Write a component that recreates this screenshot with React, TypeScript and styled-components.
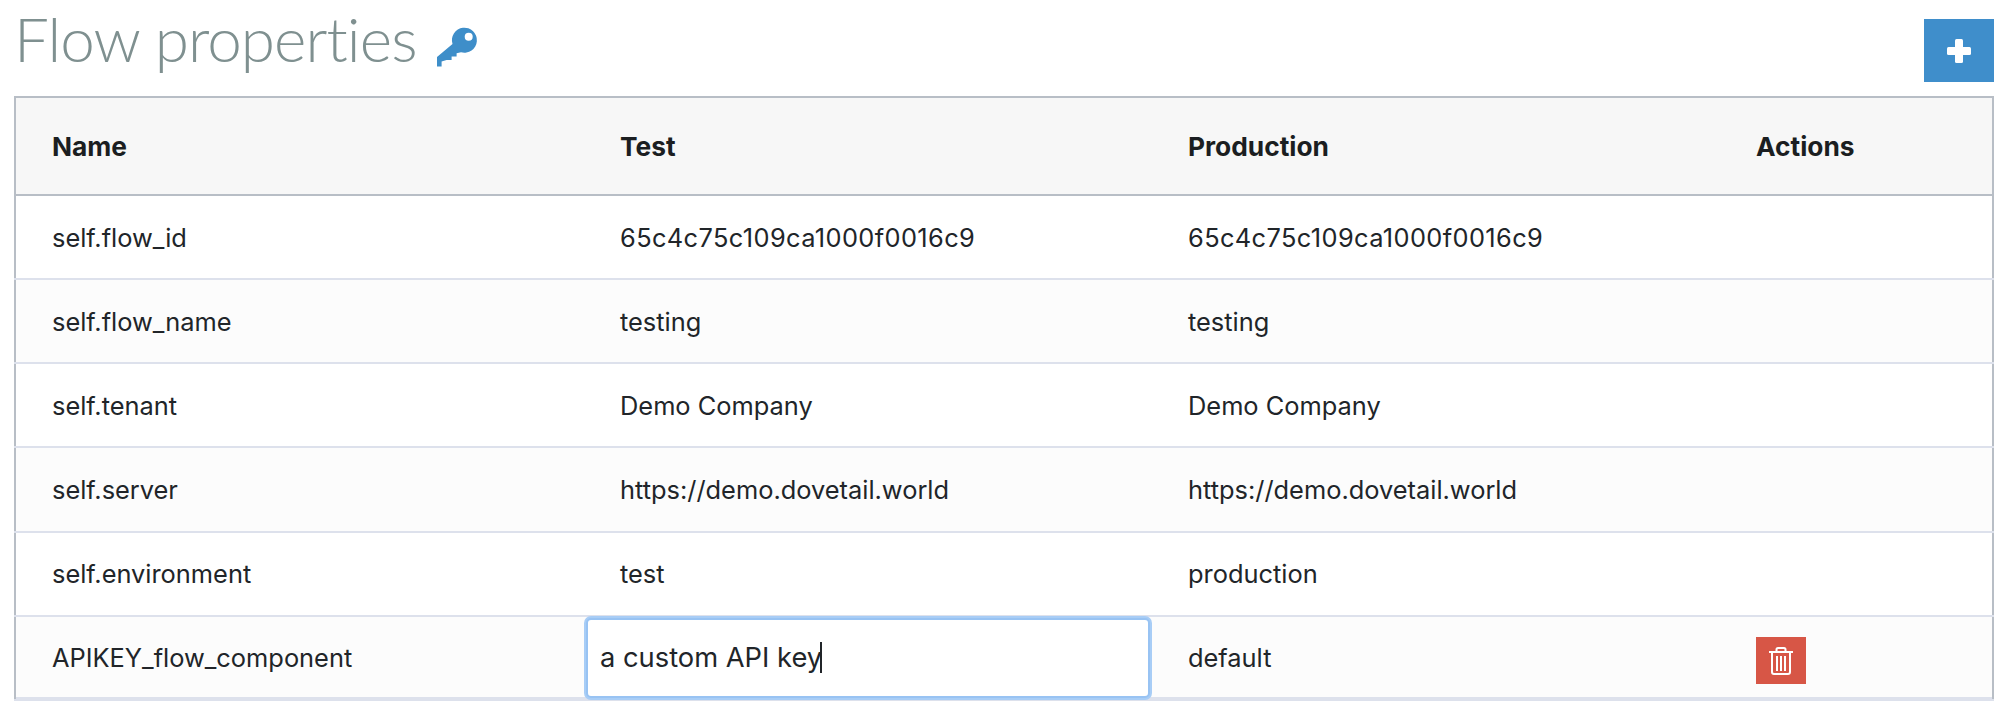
import React from "react";
import styled, { createGlobalStyle } from "styled-components";

const Global = createGlobalStyle`
  html, body { margin: 0; padding: 0; background: #fff; }
  body { font-family: Inter, "Liberation Sans", sans-serif; color: #212529; }
`;

const Page = styled.div`
  width: 2008px;
  height: 714px;
  box-sizing: border-box;
  padding: 0 14px 0 14px;
  overflow: hidden;
`;

const Header = styled.header`
  height: 96px;
  display: flex;
  justify-content: space-between;
  align-items: flex-start;
`;

const TitleWrap = styled.div`
  display: flex;
  align-items: flex-start;
  padding-top: 2px;
`;

const Title = styled.h1`
  margin: 0;
  font-family: Lato, sans-serif;
  font-weight: 300;
  font-size: 62px;
  line-height: 72px;
  letter-spacing: -0.92px;
  color: #7f9090;
  font-variant-ligatures: none;
`;

const KeyIcon = styled.svg`
  width: 70px;
  height: 70px;
  margin: 8px 0 0 3px;
  fill: #3e8ec9;
`;

const AddButton = styled.button`
  margin-top: 19px;
  width: 70px;
  height: 63px;
  border: 0;
  padding: 0;
  background: #3f8ecb;
  display: flex;
  align-items: center;
  justify-content: center;
`;

const Table = styled.table`
  width: 1980px;
  height: 605px;
  border: 2px solid #b8bec6;
  border-collapse: collapse;
  table-layout: fixed;
  font-size: 25.4px;
`;

const HeadCell = styled.th`
  height: 98px;
  background: #f7f7f7;
  border-bottom: 2px solid #b8bec6;
  padding: 0 0 0 36px;
  text-align: left;
  font-weight: 700;
  font-size: 26.3px;
  color: #1b1e21;
  box-sizing: border-box;
`;

const Row = styled.tr<{ $tint?: boolean }>`
  background: ${(p) => (p.$tint ? "#fcfcfc" : "#fff")};
  &:last-child td {
    box-shadow: inset 0 -2px 0 #dde1ec;
  }
`;

const Cell = styled.td<{ $spaced?: boolean }>`
  height: 84px;
  padding: 0 0 0 36px;
  box-sizing: border-box;
  border-bottom: 2px solid #dde1ec;
  color: #212529;
  letter-spacing: ${(p) => (p.$spaced ? "0.38px" : "0")};
`;

const InputCell = styled.td`
  height: 84px;
  padding: 0;
  box-sizing: border-box;
  border-bottom: 2px solid #dde1ec;
`;

const InputWrap = styled.div`
  position: relative;
  width: 564px;
  margin-left: 2px;
`;

const KeyInput = styled.input`
  display: block;
  box-sizing: border-box;
  width: 100%;
  height: 80px;
  padding: 0 12px;
  border: 2px solid #98c3f3;
  border-radius: 5px;
  outline: 0;
  box-shadow: 0 0 0 2px #a8cdf6;
  font-family: inherit;
  font-size: 27.3px;
  color: #212529;
  background: #fff;
  caret-color: transparent;
`;

const Caret = styled.span`
  position: absolute;
  left: 234px;
  top: 24px;
  width: 2px;
  height: 31px;
  background: #212529;
`;

const DeleteButton = styled.button`
  display: flex;
  width: 50px;
  height: 47px;
  margin-top: 6px;
  border: 0;
  padding: 0;
  background: #d75646;
  align-items: center;
  justify-content: center;
`;

const rows = [
  ["self.flow_id", "65c4c75c109ca1000f0016c9", "65c4c75c109ca1000f0016c9"],
  ["self.flow_name", "testing", "testing"],
  ["self.tenant", "Demo Company", "Demo Company"],
  ["self.server", "https://demo.dovetail.world", "https://demo.dovetail.world"],
  ["self.environment", "test", "production"],
];

export default function App() {
  return (
    <Page>
      <Global />
      <Header>
        <TitleWrap>
          <Title>Flow properties</Title>
          <KeyIcon viewBox="0 0 70 70">
            <path
              fillRule="evenodd"
              d="M32.5 34 L17 47 L17 56.6 L21.6 56.6 L21.6 51.6 L26.6 50 L31.6 50 L31.6 46.6 L36.6 46.6 L36.6 43.3 L41 42.2 A12.5 12.5 0 1 0 32.5 34 Z M48.7 26.7 m-4 0 a4 4 0 1 0 8 0 a4 4 0 1 0 -8 0 Z"
            />
          </KeyIcon>
        </TitleWrap>
        <AddButton aria-label="Add">
          <svg width="24" height="24" viewBox="0 0 24 24" fill="#fff">
            <rect x="8" y="0" width="8" height="24" rx="1.5" />
            <rect x="0" y="8" width="24" height="8" rx="1.5" />
          </svg>
        </AddButton>
      </Header>
      <Table>
        <colgroup>
          <col width="569" />
          <col width="568" />
          <col width="568" />
          <col />
        </colgroup>
        <thead>
          <tr>
            <HeadCell>Name</HeadCell>
            <HeadCell>Test</HeadCell>
            <HeadCell>Production</HeadCell>
            <HeadCell>Actions</HeadCell>
          </tr>
        </thead>
        <tbody>
          {rows.map((r, i) => (
            <Row key={r[0]} $tint={i % 2 === 1}>
              <Cell>{r[0]}</Cell>
              <Cell $spaced={i === 0}>{r[1]}</Cell>
              <Cell $spaced={i === 0}>{r[2]}</Cell>
              <Cell />
            </Row>
          ))}
          <Row $tint>
            <Cell>APIKEY_flow_component</Cell>
            <InputCell>
              <InputWrap>
                <KeyInput defaultValue="a custom API key" />
                <Caret />
              </InputWrap>
            </InputCell>
            <Cell>default</Cell>
            <Cell>
              <DeleteButton aria-label="Delete">
                <svg width="24" height="28" viewBox="0 0 24 28" fill="none" stroke="#fff">
                  <path d="M0 5h24" strokeWidth="2" />
                  <path d="M7.5 4.5V2.5a1.5 1.5 0 0 1 1.5-1.5h6a1.5 1.5 0 0 1 1.5 1.5v2" strokeWidth="2" />
                  <path d="M3 5v20a2 2 0 0 0 2 2h14a2 2 0 0 0 2-2V5" strokeWidth="2" />
                  <path d="M8 9v15M12 9v15M16 9v15" strokeWidth="2" />
                </svg>
              </DeleteButton>
            </Cell>
          </Row>
        </tbody>
      </Table>
    </Page>
  );
}
